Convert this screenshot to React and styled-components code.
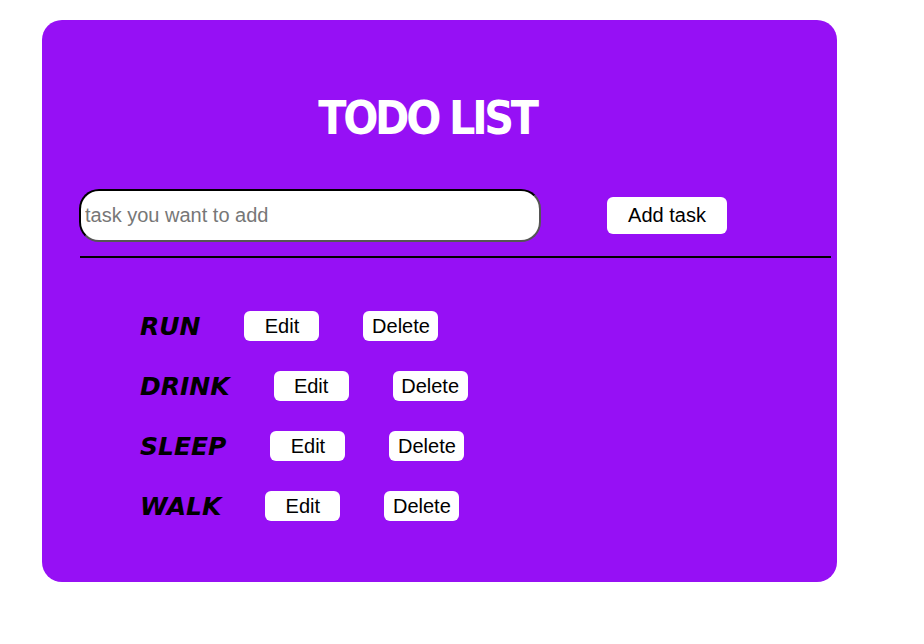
import React from "react";
import styled, { createGlobalStyle } from "styled-components";

const Global = createGlobalStyle`
  html, body { margin: 0; padding: 0; background: #fff; }
  body { font-family: "Liberation Sans", Arial, sans-serif; }
`;

const Card = styled.div`
  margin: 20px 0 0 42px;
  width: 795px;
  height: 562px;
  box-sizing: border-box;
  background: #9610f5;
  border-radius: 20px;
  padding: 0 6px 0 37px;
  display: flex;
  flex-direction: column;
`;

const Title = styled.h1`
  margin: 72px 0 0;
  height: 52px;
  text-align: center;
  padding-right: 56px;
  color: #fff;
  font-family: "DejaVu Sans Condensed", "DejaVu Sans", sans-serif;
  font-weight: 700;
  font-size: 46px;
  line-height: 52px;
  letter-spacing: -3.3px;
`;

const InputRow = styled.div`
  display: flex;
  align-items: center;
  margin-top: 45px;
  gap: 66px;
`;

const TaskInput = styled.input`
  width: 462px;
  height: 53px;
  box-sizing: border-box;
  border-radius: 20px;
  border-style: solid;
  border-width: 2px;
  border-color: #000 #555 #555 #000;
  background: #fff;
  padding: 0 4px;
  font-family: "Liberation Sans", Arial, sans-serif;
  font-size: 20px;
  outline: none;
  &::placeholder { color: #777; }
`;

const Button = styled.button`
  background: #fff;
  border: none;
  border-radius: 6px;
  color: #000;
  font-family: "Liberation Sans", Arial, sans-serif;
  font-size: 20px;
  width: ${p => (p.$big ? "120px" : "75px")};
  height: ${p => (p.$big ? "37px" : "30px")};
  padding: 0;
  cursor: pointer;
`;

const Rule = styled.hr`
  margin: 14px 0 0 1px;
  border: none;
  border-top: 2px solid #000;
  height: 0;
`;

const List = styled.ul`
  list-style: none;
  margin: 53px 0 0;
  padding: 0 0 0 61px;
  display: flex;
  flex-direction: column;
  gap: 30px;
`;

const Item = styled.li`
  display: flex;
  align-items: center;
  height: 30px;
  gap: 44px;
`;

const TaskName = styled.span`
  font-family: "DejaVu Sans", Verdana, sans-serif;
  font-style: italic;
  font-weight: 700;
  font-size: 25px;
  color: #000;
`;

const tasks = ["RUN", "DRINK", "SLEEP", "WALK"];

export default function App() {
  return (
    <>
      <Global />
      <Card>
        <Title>TODO LIST</Title>
        <InputRow>
          <TaskInput placeholder="task you want to add" />
          <Button $big>Add task</Button>
        </InputRow>
        <Rule />
        <List>
          {tasks.map(t => (
            <Item key={t}>
              <TaskName>{t}</TaskName>
              <Button>Edit</Button>
              <Button>Delete</Button>
            </Item>
          ))}
        </List>
      </Card>
    </>
  );
}
